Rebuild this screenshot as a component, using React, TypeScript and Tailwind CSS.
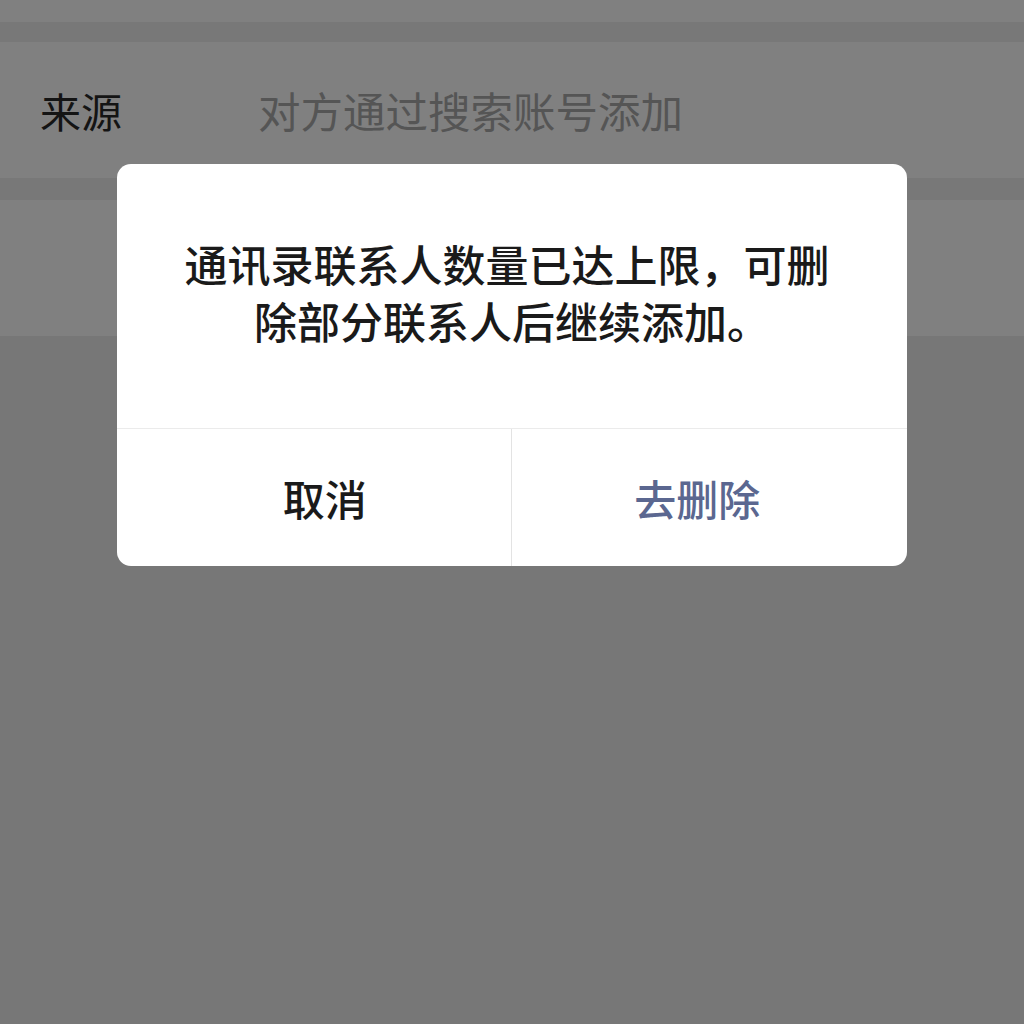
export default function App() {
  const font = { fontFamily: '"Noto Sans CJK SC", "Noto Sans", sans-serif' };
  return (
    <div className="relative w-[1024px] h-[1024px] overflow-hidden bg-[#777777]" style={font}>
      <div className="h-[22px] bg-[#808080]" />
      <div className="h-[20px] bg-[#787878]" />
      <div className="h-[136px] bg-[#808080] flex items-center pl-[40px]">
        <span className="w-[218px] text-[41px] leading-none text-[#141414]">来源</span>
        <span className="text-[42.5px] leading-none text-[#555555]">对方通过搜索账号添加</span>
      </div>
      <div className="h-[22px] bg-[#787878]" />
      <div className="h-[136px] bg-[#808080]" />

      <div className="absolute left-[117px] top-[164px] w-[790px] h-[402px] bg-white rounded-[14px] flex flex-col">
        <div className="h-[264px] flex items-center justify-center pb-[8px] pr-[10px]">
          <p className="text-[43px] leading-[57px] font-medium text-[#1a1a1a] text-center whitespace-nowrap">
            通讯录联系人数量已达上限，可删
            <br />
            <span className="pl-[10px]">除部分联系人后继续添加。</span>
          </p>
        </div>
        <div className="flex-1 flex border-t border-[#ebebeb]">
          <div className="flex-1 flex items-center justify-center pl-[22px] text-[42px] font-medium text-[#1a1a1a] border-r border-[#e3e3e3]">
            取消
          </div>
          <div className="flex-1 flex items-center justify-center pr-[24px] text-[42px] font-medium text-[#5b6790]">
            去删除
          </div>
        </div>
      </div>
    </div>
  );
}
